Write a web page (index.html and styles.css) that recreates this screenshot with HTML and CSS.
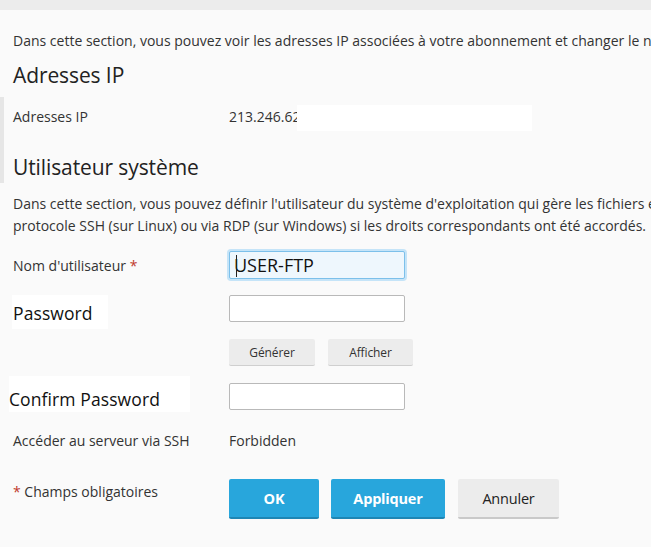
FILE: index.html
```
<!DOCTYPE html>
<html lang="fr">
<head>
<meta charset="utf-8">
<title>Utilisateur système</title>
<link rel="stylesheet" href="styles.css">
</head>
<body>
<div class="topbar"></div>
<div class="sidetab"></div>
<main class="content">
  <p class="intro">Dans cette section, vous pouvez voir les adresses IP associées à votre abonnement et changer le nom d'utilisateur du système.</p>
  <h2 class="heading">Adresses IP</h2>
  <div class="row row-ip">
    <div class="label">Adresses IP</div>
    <div class="value">213.246.62</div>
    <span class="mask"></span>
  </div>
  <h2 class="heading heading-user">Utilisateur système</h2>
  <p class="desc">Dans cette section, vous pouvez définir l'utilisateur du système d'exploitation qui gère les fichiers et<br>protocole SSH (sur Linux) ou via RDP (sur Windows) si les droits correspondants ont été accordés.</p>
  <div class="row row-user">
    <div class="label">Nom d'utilisateur <span class="req">*</span></div>
    <div class="field focused"><span class="caret"></span>USER-FTP</div>
  </div>
  <div class="row row-pass">
    <div class="label big"><span class="patch patch-pass">Password</span></div>
    <div class="field"></div>
  </div>
  <div class="row row-gen">
    <div class="label"></div>
    <div class="btns-small">
      <button class="btn-small btn-gen">Générer</button>
      <button class="btn-small btn-show">Afficher</button>
    </div>
  </div>
  <div class="row row-confirm">
    <div class="label big"><span class="patch patch-confirm">Confirm Password</span></div>
    <div class="field"></div>
  </div>
  <div class="row row-ssh">
    <div class="label">Accéder au serveur via SSH</div>
    <div class="value">Forbidden</div>
  </div>
  <div class="row row-actions">
    <div class="label"><span class="req">*</span> Champs obligatoires</div>
    <div class="actions">
      <button class="btn btn-primary btn-ok">OK</button>
      <button class="btn btn-primary btn-apply">Appliquer</button>
      <button class="btn btn-cancel">Annuler</button>
    </div>
  </div>
</main>
</body>
</html>
```
FILE: styles.css
```
html, body {
  margin: 0;
  padding: 0;
}
body {
  background: #fafafa;
  font-family: "Open Sans", "Noto Sans", sans-serif;
  color: #333;
  width: 651px;
  height: 547px;
  overflow: hidden;
  position: relative;
}
.topbar {
  height: 10px;
  background: #ececec;
}
.sidetab {
  position: absolute;
  left: 0;
  top: 97px;
  width: 4px;
  height: 86px;
  background: #e6e6e6;
}
.content {
  padding: 0 0 0 13px;
  overflow: hidden;
}
.intro {
  margin: 21px 0 0 0;
  font-size: 14px;
  line-height: 20px;
  white-space: nowrap;
  color: #333;
}
.heading {
  margin: 10px 0 0 0;
  font-size: 21px;
  font-weight: 400;
  line-height: 28px;
  color: #222;
  letter-spacing: -0.1px;
}
.heading-user {
  margin-top: 24px;
}
.row {
  display: flex;
  align-items: center;
  font-size: 14px;
}
.label {
  width: 216px;
  flex: none;
}
.row-ip {
  margin-top: 14px;
  height: 26px;
  position: relative;
}
.mask {
  position: absolute;
  left: 284px;
  top: 2px;
  width: 235px;
  height: 26px;
  background: #ffffff;
}
.desc {
  margin: 12px 0 0 0;
  font-size: 14px;
  line-height: 22px;
  white-space: nowrap;
}
.req {
  color: #c0392b;
}
.row-user {
  margin-top: 13px;
  height: 30px;
}
.field {
  box-sizing: border-box;
  width: 176px;
  height: 27px;
  border: 1px solid #b9b9b9;
  border-radius: 2px;
  background: #fff;
}
.field.focused {
  height: 28px;
  background: #eef7fd;
  border-color: #7cc0ea;
  box-shadow: 0 0 0 2px #c5e4f8;
  font-size: 18px;
  line-height: 26px;
  color: #111;
  padding-left: 4px;
  position: relative;
}
.caret {
  position: absolute;
  left: 6px;
  top: 3px;
  width: 1px;
  height: 22px;
  background: #222;
}
.row-pass {
  margin-top: 15px;
  height: 34px;
  align-items: flex-start;
}
.label.big {
  font-size: 17.5px;
  letter-spacing: 0.1px;
  color: #111;
}
.patch {
  display: flex;
  align-items: center;
  background: #fff;
  box-sizing: border-box;
}
.patch-pass {
  width: 96px;
  height: 34px;
  margin-left: -1px;
  padding-left: 1px;
  padding-top: 2px;
}
.patch-confirm {
  width: 181px;
  height: 36px;
  margin-left: -4px;
  padding-top: 9px;
}
.row-gen {
  margin-top: 10px;
  height: 27px;
}
.btns-small {
  display: flex;
  gap: 13px;
}
.btn-small {
  font-family: "Open Sans", "Noto Sans", sans-serif;
  font-size: 12px;
  letter-spacing: -0.1px;
  color: #333;
  background: #ececec;
  border: none;
  border-bottom: 1px solid #cfcfcf;
  border-radius: 2px;
  height: 27px;
  padding: 0;
}
.btn-gen { width: 86px; }
.btn-show { width: 85px; }
.row-confirm {
  margin-top: 10px;
  height: 36px;
  align-items: flex-start;
}
.row-confirm .field {
  margin-top: 7px;
}
.row-ssh {
  margin-top: 17px;
  height: 22px;
}
.row-actions {
  margin-top: 28px;
  align-items: flex-start;
}
.row-actions .label {
  padding-top: 3px;
  line-height: 20px;
}
.actions {
  display: flex;
  gap: 12px;
}
.btn {
  font-family: "Open Sans", "Noto Sans", sans-serif;
  font-size: 14.5px;
  height: 40px;
  border: none;
  border-radius: 2px;
  padding: 0;
  letter-spacing: -0.2px;
}
.btn-primary {
  background: #28a6dc;
  color: #fff;
  font-weight: 700;
  border-bottom: 2px solid #1e86b4;
}
.btn-ok { width: 90px; }
.btn-apply { width: 114px; }
.btn-cancel {
  width: 101px;
  background: #ececec;
  color: #222;
  border-bottom: 2px solid #c9c9c9;
  margin-left: 1px;
}
```
